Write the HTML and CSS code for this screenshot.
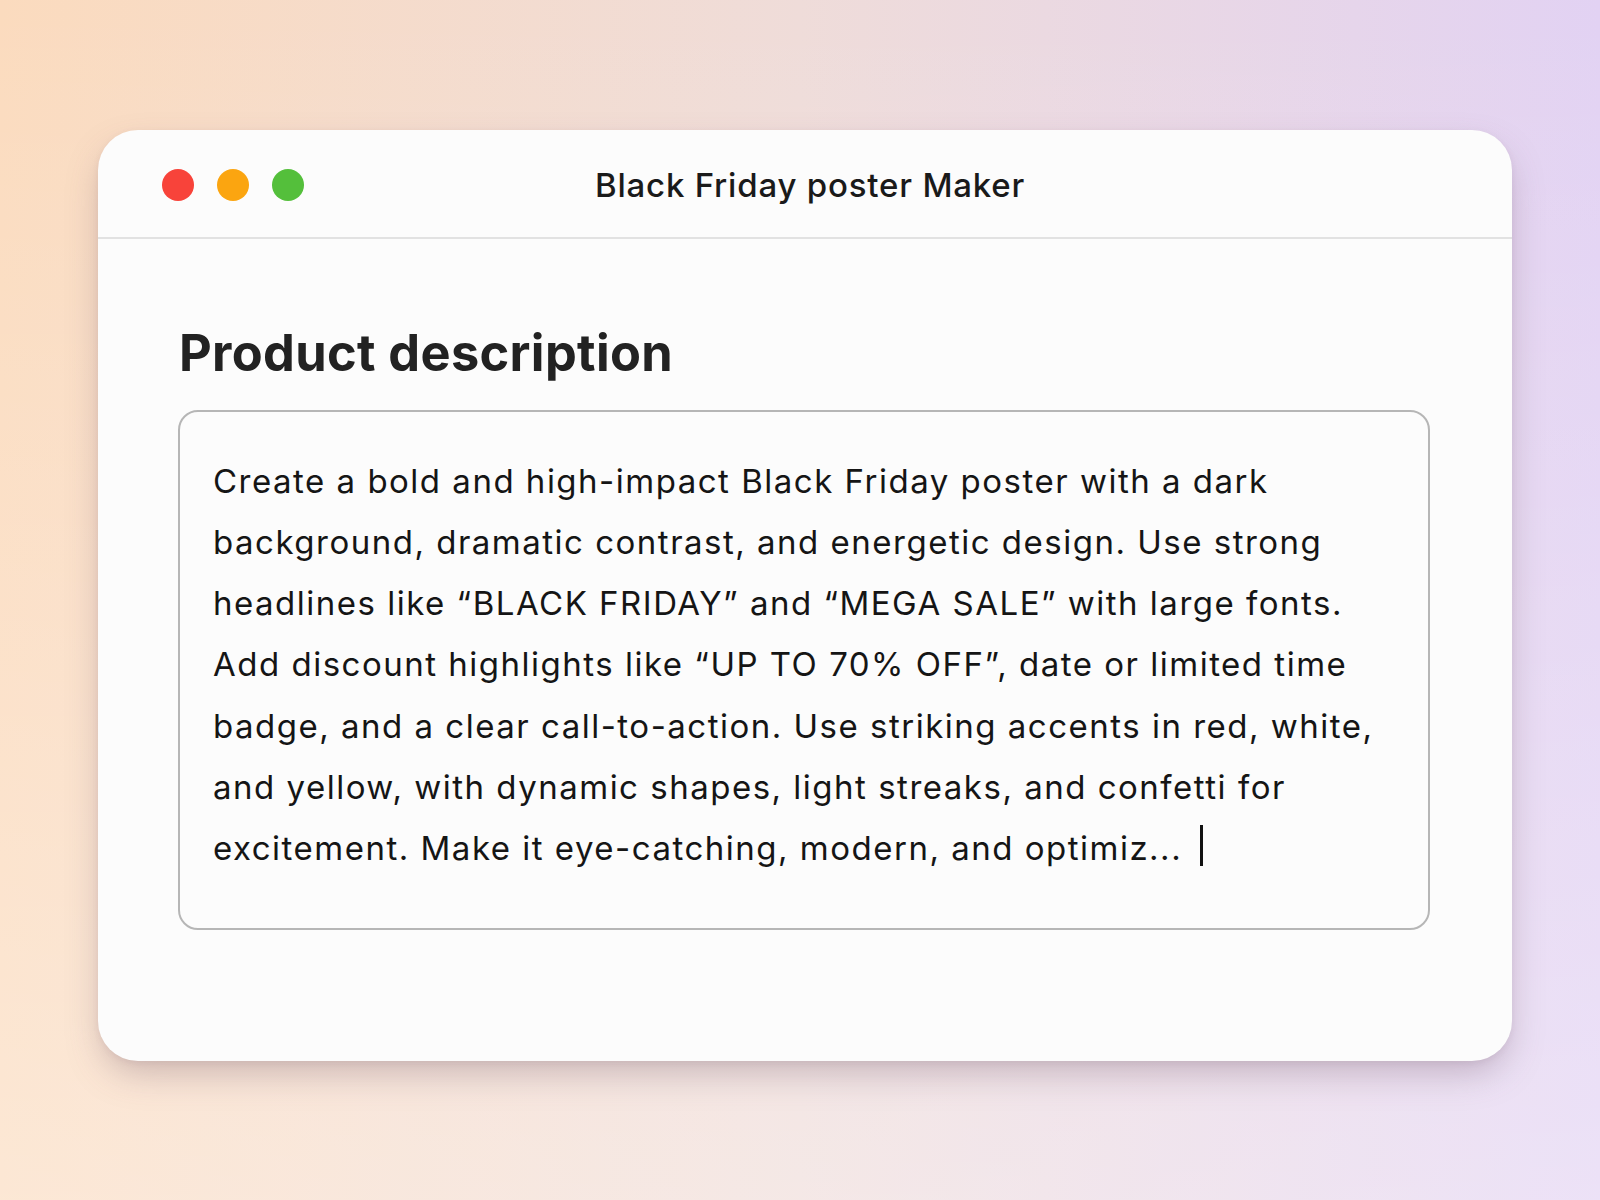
FILE: index.html
```html
<!DOCTYPE html>
<html lang="en">
<head>
<meta charset="utf-8">
<title>Black Friday poster Maker</title>
<link rel="stylesheet" href="styles.css">
</head>
<body>
<div class="window">
  <header class="titlebar">
    <div class="lights">
      <span class="light red"></span>
      <span class="light yellow"></span>
      <span class="light green"></span>
    </div>
    <div class="title">Black Friday poster Maker</div>
    <div class="spacer"></div>
  </header>
  <main class="content">
    <h1 class="heading">Product description</h1>
    <div class="textbox">
      <p class="desc">Create a bold and high-impact Black Friday poster with a dark<br>background, dramatic contrast, and energetic design. Use strong<br>headlines like “BLACK FRIDAY” and “MEGA SALE” with large fonts.<br>Add discount highlights like “UP TO 70% OFF”, date or limited time<br>badge, and a clear call-to-action. Use striking accents in red, white,<br>and yellow, with dynamic shapes, light streaks, and confetti for<br>excitement. Make it eye-catching, modern, and optimiz...<span class="caret"></span></p>
    </div>
  </main>
</div>
</body>
</html>
```
FILE: styles.css
```css
html, body {
  margin: 0;
  padding: 0;
  width: 1600px;
  height: 1200px;
  overflow: hidden;
}
body {
  font-family: "Inter", "Liberation Sans", sans-serif;
  background:
    linear-gradient(180deg, rgba(255,255,255,0) 0%, rgba(255,255,255,0.35) 100%),
    linear-gradient(90deg, #fbdbbe 0%, #efdcd9 50%, #e2d2f3 100%);
  padding: 130px 0 0 98px;
  box-sizing: border-box;
}
.window {
  width: 1414px;
  height: 931px;
  background: #fcfcfc;
  border-radius: 40px;
  box-shadow: 0 16px 36px -6px rgba(110, 80, 100, 0.35), 0 2px 6px rgba(110, 80, 100, 0.08);
  display: flex;
  flex-direction: column;
  overflow: hidden;
}
.titlebar {
  height: 109px;
  padding-top: 3px;
  box-sizing: border-box;
  border-bottom: 2px solid #e2e2e2;
  display: grid;
  grid-template-columns: 1fr auto 1fr;
  align-items: center;
  flex: none;
}
.lights {
  display: flex;
  gap: 23px;
  padding-left: 64px;
}
.light {
  width: 32px;
  height: 32px;
  border-radius: 50%;
  display: block;
}
.red { background: #f8433a; }
.yellow { background: #fba510; }
.green { background: #54bf3b; }
.title {
  font-size: 33px;
  font-weight: 500;
  letter-spacing: 0.8px;
  color: #1a1a1a;
  margin-left: 10px;
}
.content {
  padding: 0 82px 0 80px;
}
.heading {
  margin: 89px 0 31px 0;
  font-size: 50.5px;
  line-height: 1;
  font-weight: 700;
  letter-spacing: 0.35px;
  color: #222222;
  padding-left: 1px;
}
.textbox {
  border: 2px solid #b6b6b6;
  border-radius: 20px;
  padding: 39px 30px 45px 33px;
  height: 520px;
  box-sizing: border-box;
}
.desc {
  margin: 0;
  font-size: 33px;
  line-height: 61.3px;
  letter-spacing: 1.5px;
  color: #151515;
  white-space: nowrap;
}
.caret {
  display: inline-block;
  width: 3px;
  height: 41px;
  background: #111111;
  margin-left: 18px;
  vertical-align: -6px;
}
```
